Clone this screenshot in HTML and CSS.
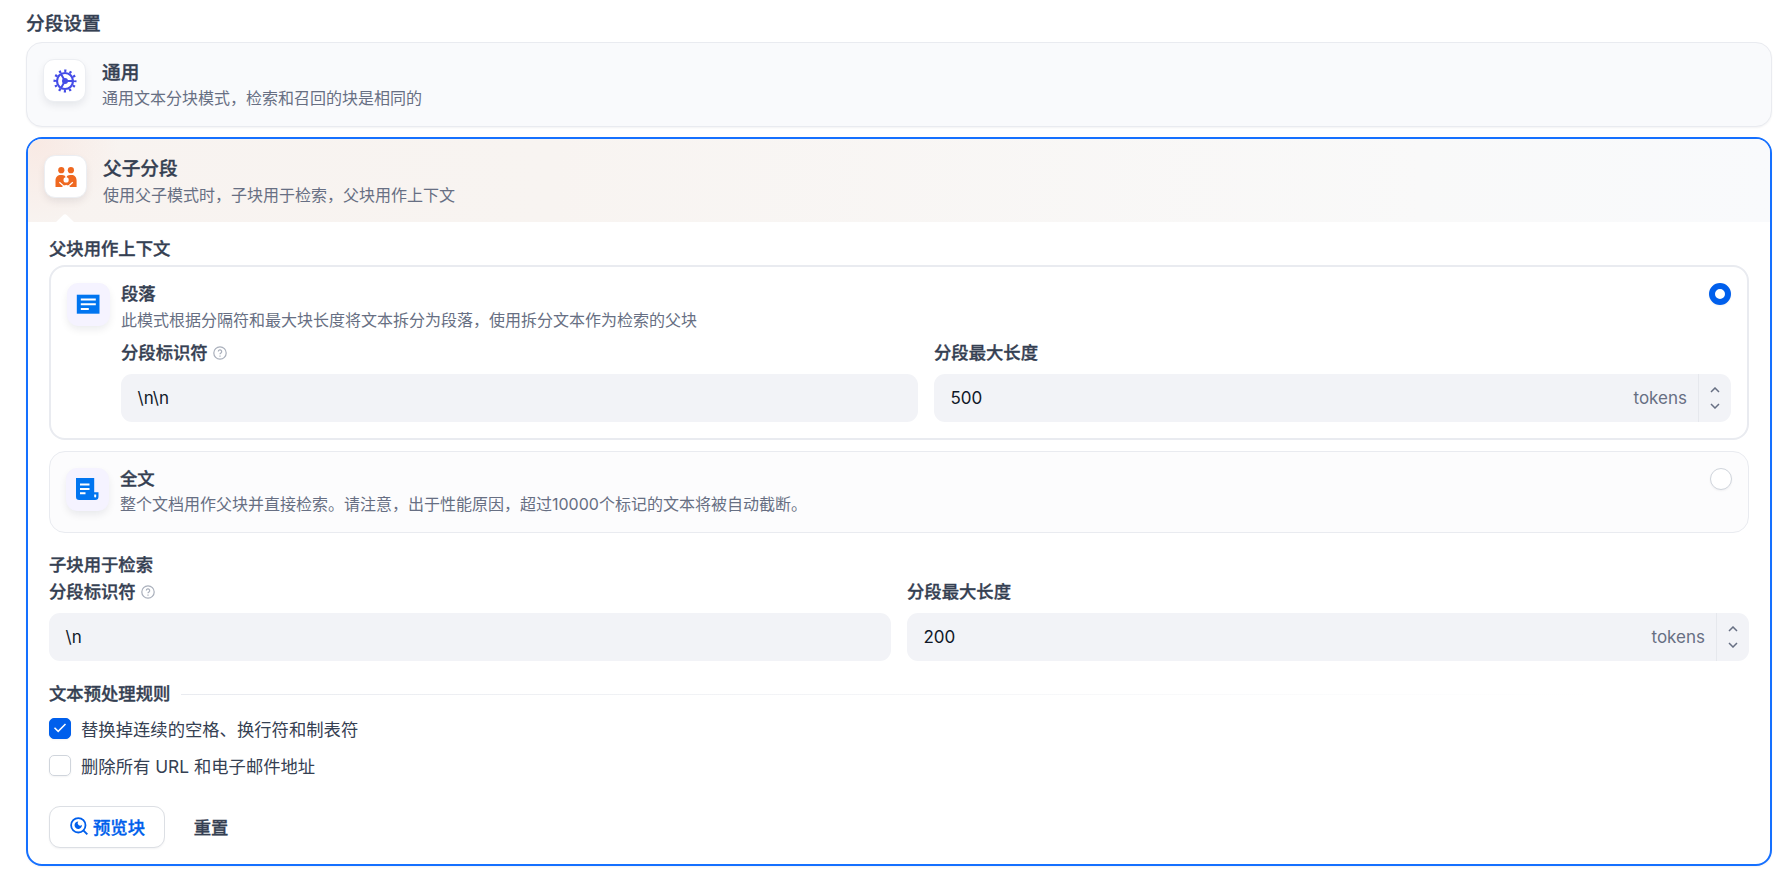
FILE: index.html
```html
<!DOCTYPE html>
<html lang="zh-CN">
<head>
    <meta charset="UTF-8">
    <meta name="viewport" content="width=device-width, initial-scale=1.0">
    <title>分段设置</title>
    <link rel="stylesheet" href="styles.css">
</head>
<body>

    <h1 class="page-title">分段设置</h1>

    <!-- 通用模式 -->
    <div class="option-card">
        <div class="icon-box">
            <svg width="24" height="24" viewBox="0 0 24 24" fill="none" stroke="#444ce7">
                <circle cx="12" cy="12" r="8" stroke-width="2.2"/>
                <circle cx="12" cy="12" r="10.2" stroke-width="2.6" stroke-dasharray="2.2 3.14" stroke-dashoffset="1.1"/>
                <circle cx="12" cy="12" r="3" fill="#444ce7" stroke="none"/>
                <path d="M12 12h8M12 12L8 5.1M12 12l-4 6.9" stroke-width="2"/>
            </svg>
        </div>
        <div class="option-text">
            <h2>通用</h2>
            <p>通用文本分块模式，检索和召回的块是相同的</p>
        </div>
    </div>

    <!-- 父子分段模式 -->
    <div class="option-card active">
        <div class="option-header">
            <div class="icon-box">
                <svg width="24" height="24" viewBox="0 0 24 24" fill="#ef6820">
                    <circle cx="7.300" cy="5.200" r="3.100"/>
                    <circle cx="16.900" cy="5.200" r="3.100"/>
                    <path d="M1.500 22v-6.500C1.500 12 3.700 10 6.800 10h1.400c1.600 0 2.900.8 3.900 2 1-1.200 2.300-2 3.900-2h1.400c3.100 0 5.200 2 5.200 5.500V22h-7l-3.500-2.200L8.600 22z"/>
                    <circle cx="12.100" cy="14.900" r="2.600" fill="#fff"/>
                    <path d="M12.100 12.800V10.500" stroke="#fff" stroke-width="1.400"/>
                    <path d="M5.400 17.200l3.600 3.200M18.800 17.200l-3.600 3.200" fill="none" stroke="#fff" stroke-width="1.300"/>
                    <path d="M8.200 22.100l1.200-2 2.700.9 2.700-.9 1.200 2z" fill="#fff"/>
                </svg>
            </div>
            <div class="option-text">
                <h2>父子分段</h2>
                <p>使用父子模式时，子块用于检索，父块用作上下文</p>
            </div>
            <svg class="arrow" width="18" height="8" viewBox="0 0 18 8"><path d="M0 8L7 1.200Q9 -.8 11 1.200L18 8z" fill="#fff"/></svg>
        </div>

        <div class="option-body">
            <h3>父块用作上下文</h3>

            <div class="radio-card checked">
                <div class="icon-box lilac">
                    <svg width="24" height="24" viewBox="0 0 24 24">
                        <path d="M.8 2.700h22.700v19H.8z" fill="#0075f0"/>
                        <path d="M4.800 7.500h15M4.800 12.300h15M4.800 17h8" stroke="#fff" stroke-width="1.900"/>
                    </svg>
                </div>
                <div class="radio-content">
                    <h4>段落</h4>
                    <p>此模式根据分隔符和最大块长度将文本拆分为段落，使用拆分文本作为检索的父块</p>
                    <div class="field-row">
                        <div class="field">
                            <label>分段标识符
                                <svg class="help" width="14" height="14" viewBox="0 0 14 14"><circle cx="7" cy="7" r="6.200"/><path d="M5.300 5.600a1.700 1.700 0 1 1 2.500 1.500c-.6.300-.8.600-.8 1.200M7 9.500v1.200"/></svg>
                            </label>
                            <div class="input">\n\n</div>
                        </div>
                        <div class="field">
                            <label>分段最大长度</label>
                            <div class="input">
                                <span class="value">500</span>
                                <span class="unit">tokens</span>
                                <span class="stepper">
                                    <svg width="10" height="6" viewBox="0 0 10 6"><path d="M1 5l4-4 4 4"/></svg>
                                    <svg width="10" height="6" viewBox="0 0 10 6"><path d="M1 1l4 4 4-4"/></svg>
                                </span>
                            </div>
                        </div>
                    </div>
                </div>
                <span class="radio"></span>
            </div>

            <div class="radio-card">
                <div class="icon-box lilac">
                    <svg width="24" height="24" viewBox="0 0 24 24">
                        <path d="M1 1h18.200v14.300h4.300v4.200a3.500 3.500 0 0 1-3.500 3.500H4.200A3.200 3.200 0 0 1 1 19.800z" fill="#0075f0"/>
                        <path d="M5 7.500h9.500M5 12h9.500M5 16.300h5.500" stroke="#fff" stroke-width="1.900"/>
                        <path d="M19.200 17.500h2v2a1 1 0 0 1-2 0z" fill="#fff"/>
                    </svg>
                </div>
                <div class="radio-content">
                    <h4>全文</h4>
                    <p>整个文档用作父块并直接检索。请注意，出于性能原因，超过10000个标记的文本将被自动截断。</p>
                </div>
                <span class="radio"></span>
            </div>

            <h3 class="child-title">子块用于检索</h3>
            <div class="field-row child-row">
                <div class="field">
                    <label>分段标识符
                        <svg class="help" width="14" height="14" viewBox="0 0 14 14"><circle cx="7" cy="7" r="6.200"/><path d="M5.300 5.600a1.700 1.700 0 1 1 2.500 1.500c-.6.300-.8.600-.8 1.200M7 9.500v1.200"/></svg>
                    </label>
                    <div class="input">\n</div>
                </div>
                <div class="field">
                    <label>分段最大长度</label>
                    <div class="input">
                        <span class="value">200</span>
                        <span class="unit">tokens</span>
                        <span class="stepper">
                            <svg width="10" height="6" viewBox="0 0 10 6"><path d="M1 5l4-4 4 4"/></svg>
                            <svg width="10" height="6" viewBox="0 0 10 6"><path d="M1 1l4 4 4-4"/></svg>
                        </span>
                    </div>
                </div>
            </div>

            <!-- 预处理规则 -->
            <div class="rules-title">
                <h3>文本预处理规则</h3>
                <span class="divider"></span>
            </div>
            <div class="rule">
                <span class="checkbox checked">
                    <svg width="14" height="12" viewBox="0 0 14 12"><path d="M1.500 5.800l3.700 3.600 7.300-7.400" fill="none" stroke="#fff" stroke-width="1.500"/></svg>
                </span>
                <span>替换掉连续的空格、换行符和制表符</span>
            </div>
            <div class="rule">
                <span class="checkbox"></span>
                <span>删除所有 URL 和电子邮件地址</span>
            </div>

            <!-- 操作按钮 -->
            <div class="actions">
                <button class="btn preview">
                    <svg width="18" height="18" viewBox="0 0 18 18" fill="none" stroke="#005fec">
                        <circle cx="8.300" cy="8.300" r="7.200" stroke-width="1.800"/>
                        <path d="M13.300 13.300l4 4" stroke-width="1.900"/>
                        <path d="M8.300 4.500A2 2 0 0 0 11.900 7.700 3.700 3.700 0 1 1 8.300 4.500z" fill="#005fec" stroke="none"/>
                    </svg>
                    <span>预览块</span>
                </button>
                <button class="btn reset">重置</button>
            </div>
        </div>
    </div>

</body>
</html>
```
FILE: styles.css
```css
/* 通用样式 */
* {
    margin: 0;
    padding: 0;
    box-sizing: border-box;
}

body {
    background-color: #fff;
    padding: 11px 12px 0 26px;
    font-family: Inter, "Noto Sans CJK SC", sans-serif;
    color: #354052;
}

svg {
    display: block;
    flex-shrink: 0;
}

h1, h2, h3, h4, label, .btn {
    font-weight: 500;
    -webkit-text-stroke: 0.35px currentColor;
}

.page-title {
    font-size: 18.67px;
    line-height: 26px;
    margin-bottom: 5px;
}

/* 模式卡片 */
.option-card {
    display: flex;
    height: 85px;
    padding: 16px 17px 0 16px;
    border: 1px solid #e9ebf0;
    border-radius: 16px;
    background-color: #f9fafc;
    box-shadow: 0 1px 2px rgba(16, 24, 40, 0.05);
    margin-bottom: 10px;
}

.option-card.active {
    flex-direction: column;
    height: 729px;
    padding: 0;
    border: 2px solid #1570ff;
    background-color: #fff;
    overflow: hidden;
}

.option-header {
    display: flex;
    position: relative;
    height: 83px;
    flex-shrink: 0;
    padding: 16px 17px 0 16px;
    background: radial-gradient(circle at 10px 5px, rgba(249, 220, 210, 0.4), rgba(249, 220, 210, 0) 80px), linear-gradient(90deg, #f8f3f0 0%, #f8f4f1 30%, #f9f9f9 80%, #f9fafc 100%);
}

.arrow {
    position: absolute;
    left: 28px;
    bottom: 0;
}

.icon-box {
    display: flex;
    align-items: center;
    justify-content: center;
    flex-shrink: 0;
    width: 43px;
    height: 43px;
    border: 1px solid #eceef2;
    border-radius: 11px;
    background-color: #fff;
    box-shadow: 0 4px 8px -1px rgba(16, 24, 40, 0.09);
}

.icon-box.lilac {
    border-color: #f5f3ff;
    background-color: #f5f3ff;
}

.icon-box.lilac svg {
    margin: 0 1px 1px 0;
}

.option-text {
    margin-top: 1px;
    margin-left: 16px;
}

.option-text h2 {
    font-size: 18.67px;
    line-height: 26px;
}

.option-header .option-text p {
    padding-top: 1px;
}

.option-text p,
.radio-content p {
    font-size: 16px;
    line-height: 24px;
    color: #676f83;
}

/* 展开内容 */
.option-body {
    padding: 14px 21px 0;
}

.option-body h3 {
    font-size: 17.33px;
    line-height: 26px;
}

.radio-card {
    display: flex;
    height: 82px;
    margin-top: 11px;
    padding: 16px 16px 0;
    border: 1px solid #e9ebf0;
    border-radius: 16px;
    background-color: #fcfcfd;
}

.radio-card.checked {
    height: 175px;
    margin-top: 3px;
    border-width: 2px;
    background-color: #fff;
}

.radio-content {
    flex: 1;
    margin-left: 11px;
}

.radio-content h4 {
    font-size: 17.33px;
    line-height: 22px;
}

.radio-content p {
    margin-top: 2px;
}

.checked .radio-content p {
    margin-top: 3px;
}

.radio-content .field-row {
    margin-top: 8px;
    margin-right: -22px;
}

.radio {
    width: 22px;
    height: 22px;
    border: 1px solid #d0d5dc;
    border-radius: 50%;
    background-color: #fff;
    box-shadow: 0 1px 2px rgba(16, 24, 40, 0.05);
}

.radio-card.checked .radio {
    border: 6px solid #005fec;
}

/* 表单字段 */
.field-row {
    display: flex;
    gap: 16px;
}

.field {
    flex: 1;
}

.field label {
    display: flex;
    align-items: center;
    gap: 5px;
    font-size: 17.33px;
    line-height: 26px;
}

.help {
    fill: none;
    stroke: #a9afbb;
    stroke-width: 1.2;
}

.input {
    display: flex;
    align-items: center;
    height: 48px;
    margin-top: 8px;
    padding-left: 16.5px;
    border-radius: 11px;
    background-color: #f2f3f7;
    font-size: 17px;
    color: #101828;
}

.value {
    flex: 1;
}

.unit {
    padding-right: 11px;
    color: #676f83;
}

.stepper {
    display: flex;
    flex-direction: column;
    align-items: center;
    justify-content: center;
    gap: 10px;
    width: 33px;
    height: 48px;
    border-left: 1px solid #e6e8ed;
    fill: none;
    stroke: #676f83;
    stroke-width: 1.5;
}

.child-title {
    margin-top: 19px;
}

.child-row {
    margin-top: 1px;
}

/* 预处理规则 */
.rules-title {
    display: flex;
    align-items: center;
    margin-top: 20px;
}

.divider {
    flex: 1;
    height: 1px;
    margin-left: 11px;
    background: linear-gradient(90deg, #e9ebf0, rgba(255, 255, 255, 0) 90%);
}

.rule {
    display: flex;
    align-items: center;
    height: 26px;
    gap: 10px;
    margin-top: 8px;
    font-size: 17.33px;
}

.rule + .rule {
    margin-top: 11px;
}

.checkbox {
    display: flex;
    align-items: center;
    justify-content: center;
    width: 22px;
    height: 21px;
    border: 1px solid #d0d5dc;
    border-radius: 5px;
    box-shadow: 0 1px 2px rgba(16, 24, 40, 0.05);
}

.checkbox.checked {
    border-color: #005fec;
    background-color: #005fec;
}

/* 按钮 */
.actions {
    display: flex;
    margin-top: 28px;
}

.btn {
    display: flex;
    align-items: center;
    justify-content: center;
    height: 42px;
    padding-bottom: 2px;
    border: 1px solid transparent;
    border-radius: 11px;
    background-color: #fff;
    font-family: inherit;
    font-size: 17.33px;
    color: #354052;
}

.btn.preview {
    gap: 5px;
    width: 116px;
    padding-left: 1px;
    border-color: #dcdfe4;
    box-shadow: 0 1px 2px rgba(16, 24, 40, 0.05);
    color: #005fec;
}

.btn.reset {
    width: 92px;
}
```
